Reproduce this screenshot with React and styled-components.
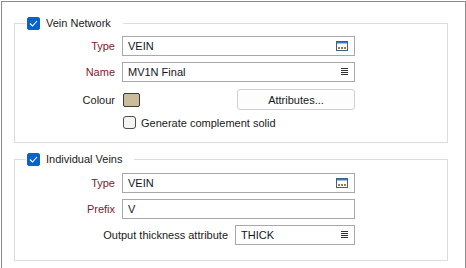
import styled, { createGlobalStyle } from "styled-components";

const GlobalStyle = createGlobalStyle`
  html, body {
    margin: 0;
    padding: 0;
    background: #ffffff;
  }
  body {
    font-family: "Liberation Sans", Arial, sans-serif;
    font-size: 11px;
    color: #1a1a1a;
  }
`;

const Frame = styled.div`
  box-sizing: border-box;
  margin: 1px 0 0 1px;
  width: 465px;
  height: 267px;
  border: 1px solid #8c8c8c;
  border-bottom: none;
  padding: 0 0 0 12px;
  display: flex;
  flex-direction: column;
  gap: 1px;
`;

const Group = styled.fieldset`
  box-sizing: border-box;
  width: 434px;
  margin: ${(props) => props.$top} 0 0 0;
  padding: 0 0 ${(props) => props.$bottom} 0;
  border: 1px solid #dcdcdc;
  min-inline-size: 0;
`;

const Legend = styled.legend`
  display: flex;
  align-items: center;
  gap: 6px;
  margin-left: 11px;
  padding: 0 12px 0 1px;
  height: 16px;
  line-height: 16px;
`;

const CheckBox = styled.span`
  box-sizing: border-box;
  width: 13px;
  height: 13px;
  display: inline-flex;
  align-items: center;
  justify-content: center;
  flex: none;
  background: ${(props) => (props.$checked ? "#0a62c4" : "#f4f4f4")};
  border: 1px solid ${(props) => (props.$checked ? "#0a62c4" : "#4d4d4d")};
  border-radius: ${(props) => (props.$checked ? "2px" : "3px")};
`;

const Form = styled.div`
  display: grid;
  grid-template-columns: 100px 233px;
  column-gap: 7px;
  align-items: center;
`;

const Label = styled.label`
  text-align: right;
  color: ${(props) => (props.$required ? "#7f1a2c" : "#1a1a1a")};
  white-space: nowrap;
`;

const Input = styled.div`
  box-sizing: border-box;
  height: 20px;
  width: ${(props) => props.$w || "100%"};
  border: 1px solid #a8a8a8;
  background: #ffffff;
  display: flex;
  align-items: center;
  justify-content: space-between;
  padding: 0 6px 0 5px;
  color: #141424;
  font-size: 11px;
`;

const ColourRow = styled.div`
  display: flex;
  align-items: center;
  justify-content: space-between;
`;

const Swatch = styled.span`
  box-sizing: border-box;
  margin-left: 1px;
  width: 17px;
  height: 14px;
  border: 1px solid #3a3a3a;
  border-radius: 2px;
  background: #cbbc9b;
`;

const Button = styled.button`
  box-sizing: border-box;
  width: 118px;
  height: 21px;
  border: 1px solid #d0d0d0;
  border-radius: 3px;
  background: #fdfdfd;
  font-family: "Liberation Sans", Arial, sans-serif;
  font-size: 11px;
  color: #1a1a1a;
  padding: 0;
`;

const CheckRow = styled.div`
  display: flex;
  align-items: center;
  gap: 5px;
  padding-left: 1px;
`;

const WideRow = styled.div`
  grid-column: 1 / -1;
  display: flex;
  align-items: center;
  justify-content: flex-end;
  gap: 7px;
`;

const Spacer = styled.div`
  grid-column: 1 / -1;
  height: ${(props) => props.$h};
`;

function Tick() {
  return (
    <svg width="9" height="7" viewBox="0 0 9 7">
      <path d="M1 3.5 L3.5 6 L8 1" fill="none" stroke="#ffffff" strokeWidth="1.1" />
    </svg>
  );
}

function BrowseIcon() {
  return (
    <svg width="12" height="10" viewBox="0 0 12 10">
      <rect x="0.5" y="0.5" width="11" height="9" fill="#ffffff" stroke="#3d5f80" />
      <rect x="1" y="1" width="10" height="1.5" fill="#3b7cc2" />
      <rect x="2" y="6" width="2" height="2" fill="#a47b3c" />
      <rect x="5" y="6" width="2" height="2" fill="#a47b3c" />
      <rect x="8" y="6" width="2" height="2" fill="#a47b3c" />
    </svg>
  );
}

function ListIcon() {
  return (
    <svg width="7" height="8" viewBox="0 0 7 8">
      <rect x="0" y="0" width="7" height="1" fill="#333333" />
      <rect x="0" y="2" width="7" height="1" fill="#333333" />
      <rect x="0" y="4" width="7" height="1" fill="#333333" />
      <rect x="0" y="6" width="7" height="1" fill="#333333" />
    </svg>
  );
}

function Field({ value, icon, width }) {
  return (
    <Input $w={width}>
      <span>{value}</span>
      {icon === "browse" && <BrowseIcon />}
      {icon === "list" && <ListIcon />}
    </Input>
  );
}

export default function App() {
  return (
    <>
      <GlobalStyle />
      <Frame>
        <Group $top="13px" $bottom="13px">
          <Legend>
            <CheckBox $checked>
              <Tick />
            </CheckBox>
            Vein Network
          </Legend>
          <Form>
            <Spacer $h="5px" />
            <Label $required>Type</Label>
            <Field value="VEIN" icon="browse" />
            <Spacer $h="6px" />
            <Label $required>Name</Label>
            <Field value="MV1N Final" icon="list" />
            <Spacer $h="7px" />
            <Label>Colour</Label>
            <ColourRow>
              <Swatch />
              <Button>Attributes...</Button>
            </ColourRow>
            <Spacer $h="6px" />
            <span />
            <CheckRow>
              <CheckBox />
              Generate complement solid
            </CheckRow>
          </Form>
        </Group>
        <Group $top="7px" $bottom="15px">
          <Legend>
            <CheckBox $checked>
              <Tick />
            </CheckBox>
            Individual Veins
          </Legend>
          <Form>
            <Spacer $h="6px" />
            <Label $required>Type</Label>
            <Field value="VEIN" icon="browse" />
            <Spacer $h="6px" />
            <Label $required>Prefix</Label>
            <Field value="V" />
            <Spacer $h="6px" />
            <WideRow>
              <Label>Output thickness attribute</Label>
              <Field value="THICK" icon="list" width="120px" />
            </WideRow>
          </Form>
        </Group>
      </Frame>
    </>
  );
}
